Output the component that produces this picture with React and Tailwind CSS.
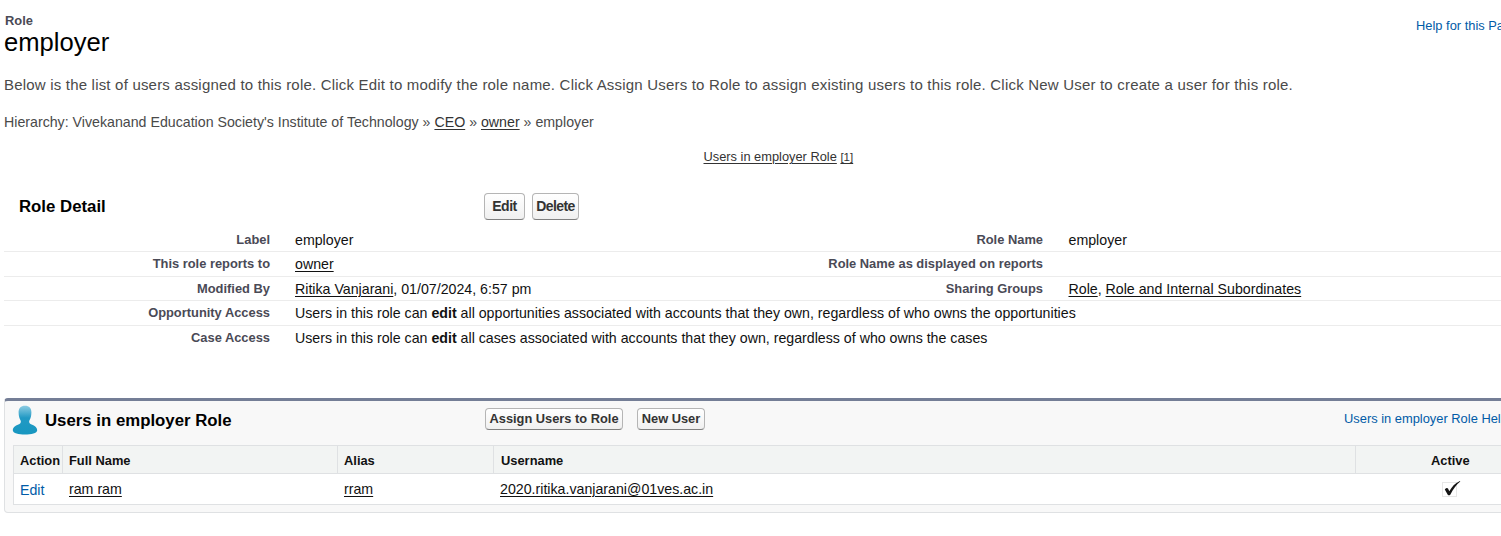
import React from "react";

const linkClass = "underline underline-offset-[2px] decoration-1";

function Button({ children, className }) {
  return (
    <button
      className={`box-border flex shrink-0 items-center justify-center whitespace-nowrap rounded-[4px] border border-[#b5b5b5] border-b-[#7f7f7f] bg-linear-to-b from-white to-[#f0f0f0] p-0 font-bold text-[#333] ${className}`}
    >
      {children}
    </button>
  );
}

function DetailRow({ label, children, rightLabel, right, className }) {
  return (
    <div className={`flex border-b ${className}`}>
      <div className="w-[266px] shrink-0 pt-px text-right text-[12.88px] leading-[21px] font-bold text-[#4a4a56]">{label}</div>
      <div className="w-[533px] shrink-0 grow pl-[25px] text-[14.2px] leading-[25px]">{children}</div>
      {rightLabel && (
        <>
          <div className="w-[240px] shrink-0 pt-px text-right text-[12.88px] leading-[21px] font-bold text-[#4a4a56]">{rightLabel}</div>
          <div className="w-[458px] shrink-0 pl-[25.5px] text-[14.2px] leading-[25px]">{right}</div>
        </>
      )}
    </div>
  );
}

function PersonIcon() {
  return (
    <svg className="h-[30px] w-[26px] shrink-0" viewBox="0 0 26 30">
      <defs>
        <linearGradient id="head" x1="0" y1="0" x2="0" y2="1">
          <stop offset="0" stopColor="#8ccbe2" />
          <stop offset="0.22" stopColor="#55b2d3" />
          <stop offset="0.42" stopColor="#2199c4" />
          <stop offset="1" stopColor="#1797c0" />
        </linearGradient>
      </defs>
      <path
        d="M13 .8C8.800.8 6.500 3.300 6.600 7.500c.1 3.500.8 5.800 1.900 7.700.7 1.400.4 2.900-1 3.700C4.600 20.300.8 21.400.8 25.300c0 3 6 4.200 12.200 4.200s12.200-1.200 12.200-4.200c0-3.900-3.800-5-6.700-6.400-1.400-.8-1.700-2.300-1-3.700 1.100-1.900 1.800-4.200 1.900-7.700C19.500 3.300 17.200.8 13 .8z"
        fill="url(#head)"
      />
    </svg>
  );
}

function CheckIcon() {
  return (
    <svg className="h-[18px] w-[20px]" viewBox="0 0 20 18">
      <rect x="1.500" y="2.500" width="14" height="14" fill="#fff" stroke="#cfcfcf" strokeDasharray="1 1" />
      <path d="M3.800 9.400Q5.600 7.400 7 8.400L8.300 11.200C10.800 6.800 13.800 3 18.900.9l.4.700C15.400 4.600 12 9.200 9.300 14.800Q7.900 15.800 6.900 14.900z" fill="#151515" />
    </svg>
  );
}

export default function App() {
  return (
    <div className="h-[536px] w-full overflow-hidden bg-white pl-[4px] font-['Liberation_Sans',Arial,sans-serif] text-[14.2px] whitespace-nowrap text-[#111]">
      <header className="flex h-[64px] justify-between">
        <div className="pt-[13px]">
          <div className="pl-[1px] text-[12.88px] leading-[15px] font-bold text-[#4a4a56]">Role</div>
          <h1 className="text-[25.6px] leading-[28px] text-black">employer</h1>
        </div>
        <div className="w-[85px] pt-[18px] text-[12.88px] leading-[15px] text-[#015ba7]">Help for this Page</div>
      </header>

      <p className="h-[42px] pt-[11px] text-[15px] leading-[20px] tracking-[0.198px] text-[#4a4a4a]">
        Below is the list of users assigned to this role. Click Edit to modify the role name. Click Assign Users to Role to assign existing users to this role. Click New User to create a user for this role.
      </p>
      <div className="h-[42px] pt-[6px] text-[14.2px] leading-[20px] text-[#4a4a4a]">
        Hierarchy: Vivekanand Education Society's Institute of Technology » <a className={`${linkClass} text-[#333]`}>CEO</a> » <a className={`${linkClass} text-[#333]`}>owner</a> » employer
      </div>
      <div className="h-[45px] pl-[699.5px] text-[12.84px] leading-[18px] text-[#333]">
        <a className={linkClass}>Users in employer Role</a> <a className={`${linkClass} text-[11.5px]`}>[1]</a>
      </div>

      <section className="h-[205px]">
        <div className="flex h-[34px]">
          <h2 className="w-[480px] shrink-0 pt-px pl-[15px] text-[16.8px] leading-[26px] font-bold text-black">Role Detail</h2>
          <div className="flex gap-[7px]">
            <Button className="h-[27px] w-[41px] text-[14px] tracking-[-0.45px]">Edit</Button>
            <Button className="h-[27px] w-[47px] text-[14px] tracking-[-0.6px]">Delete</Button>
          </div>
        </div>
        <DetailRow className="h-[25px] border-[#ececec] pt-px" label="Label" rightLabel="Role Name" right="employer">employer</DetailRow>
        <DetailRow className="h-[25px] border-[#ececec]" label="This role reports to" rightLabel="Role Name as displayed on reports"><a className={linkClass}>owner</a></DetailRow>
        <DetailRow
          className="h-[24px] border-[#ececec]"
          label="Modified By"
          rightLabel="Sharing Groups"
          right={<><a className={linkClass}>Role</a>, <a className={linkClass}>Role and Internal Subordinates</a></>}
        >
          <a className={linkClass}>Ritika Vanjarani</a>, 01/07/2024, 6:57 pm
        </DetailRow>
        <DetailRow className="h-[25px] border-[#ececec]" label="Opportunity Access">
          Users in this role can <b>edit</b> all opportunities associated with accounts that they own, regardless of who owns the opportunities
        </DetailRow>
        <DetailRow className="h-[25px] border-transparent" label="Case Access">
          Users in this role can <b>edit</b> all cases associated with accounts that they own, regardless of who owns the cases
        </DetailRow>
      </section>

      <section className="mr-[-20px] h-[115px] rounded-[4px] border border-t-[3px] border-[#dfe1e3] border-t-[#747e96] bg-[#f8f8f8] pl-[8px]">
        <div className="flex h-[44px]">
          <div className="flex w-[472px] shrink-0 pt-[4px]">
            <div className="-ml-px flex"><PersonIcon /></div>
            <h2 className="pt-px pl-[7px] text-[16.8px] leading-[30px] font-bold text-black">Users in employer Role</h2>
          </div>
          <div className="flex grow gap-[14px] pt-[7px]">
            <Button className="h-[22px] w-[138px] text-[12.84px]">Assign Users to Role</Button>
            <Button className="h-[22px] w-[68px] text-[12.84px]">New User</Button>
          </div>
          <div className="w-[176px] shrink-0 pt-[9px] text-[12.88px] leading-[18px] text-[#015ba7]">Users in employer Role Help</div>
        </div>
        <div className="border border-[#dfe1e3] bg-white">
          <div className="flex h-[28px] border-b border-[#dfe1e3] bg-[#f2f4f3] text-[12.88px] leading-[29px] font-bold">
            <div className="w-[49px] shrink-0 border-r border-[#dfe1e3] pl-[6px]">Action</div>
            <div className="w-[275px] shrink-0 border-r border-[#dfe1e3] pl-[6px]">Full Name</div>
            <div className="w-[156px] shrink-0 border-r border-[#dfe1e3] pl-[6px]">Alias</div>
            <div className="w-[862px] shrink-0 border-r border-[#dfe1e3] pl-[7px]">Username</div>
            <div className="pl-[75px]">Active</div>
          </div>
          <div className="flex h-[30px] text-[14.2px] leading-[30px]">
            <div className="w-[49px] shrink-0 pt-px pl-[6px] text-[#015ba7]">Edit</div>
            <div className="w-[275px] shrink-0 pl-[6px]"><a className={linkClass}>ram ram</a></div>
            <div className="w-[156px] shrink-0 pl-[6px]"><a className={linkClass}>rram</a></div>
            <div className="w-[862px] shrink-0 pl-[6px]"><a className={linkClass}>2020.ritika.vanjarani@01ves.ac.in</a></div>
            <div className="pt-[6px] pl-[85px]"><CheckIcon /></div>
          </div>
        </div>
      </section>
    </div>
  );
}
